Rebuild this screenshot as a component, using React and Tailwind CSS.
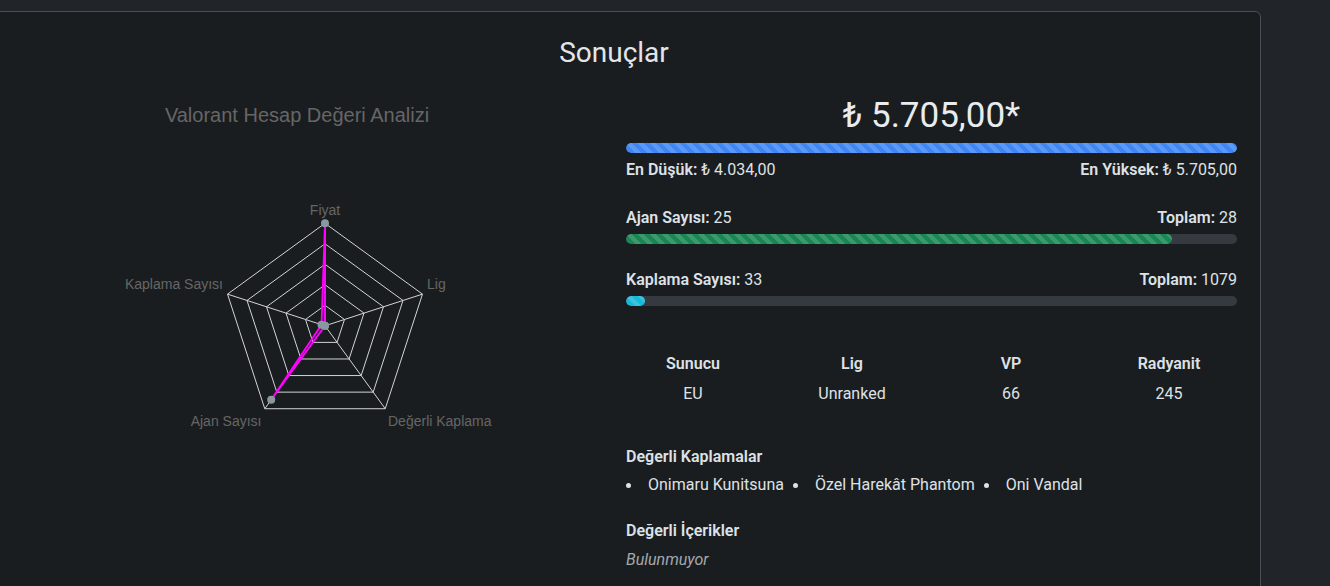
import React from "react";

const stripe =
  "bg-[linear-gradient(45deg,rgba(255,255,255,0.15)_25%,transparent_25%,transparent_50%,rgba(255,255,255,0.15)_50%,rgba(255,255,255,0.15)_75%,transparent_75%,transparent)] bg-[length:12px_12px]";

const CX = 325;
const CY = 325.8;
const R = 102.5;
const values = [1, 0, 0, 25 / 28, 0.036];

function pt(i, r) {
  const a = ((i * 72 - 90) * Math.PI) / 180;
  return [CX + r * Math.cos(a), CY + r * Math.sin(a)];
}

function Radar() {
  const rings = [1, 2, 3, 4, 5].map((k) =>
    [0, 1, 2, 3, 4].map((i) => pt(i, (R * k) / 5).join(",")).join(" ")
  );
  const data = values.map((v, i) => pt(i, v * R));
  return (
    <svg width="610" height="350" viewBox="-8 94 610 350" className="block">
      <text
        x="297"
        y="115"
        textAnchor="middle"
        dominantBaseline="central"
        fill="#666666"
        fontSize="20"
        fontFamily="'Liberation Sans', Arial, sans-serif"
      >
        Valorant Hesap Değeri Analizi
      </text>
      {rings.map((p, i) => (
        <polygon key={i} points={p} fill="none" stroke="#d4d4d4" strokeWidth="1" />
      ))}
      {[0, 1, 2, 3, 4].map((i) => {
        const [x, y] = pt(i, R);
        return <line key={i} x1={CX} y1={CY} x2={x} y2={y} stroke="#d4d4d4" strokeWidth="1" />;
      })}
      <polygon
        points={data.map((p) => p.join(",")).join(" ")}
        fill="rgba(255,0,255,0.1)"
        stroke="#ff00ff"
        strokeWidth="1.8"
        strokeLinejoin="round"
      />
      {data.map(([x, y], i) => (
        <circle key={i} cx={x} cy={y} r="4" fill="#8a999e" />
      ))}
      <g fill="#666666" fontSize="14" fontFamily="'Liberation Sans', Arial, sans-serif">
        <text x="325" y="209.5" textAnchor="middle" dominantBaseline="central">Fiyat</text>
        <text x="427" y="283.5" textAnchor="start" dominantBaseline="central">Lig</text>
        <text x="223" y="283.5" textAnchor="end" dominantBaseline="central">Kaplama Sayısı</text>
        <text x="261.5" y="420.5" textAnchor="end" dominantBaseline="central">Ajan Sayısı</text>
        <text x="388" y="420.5" textAnchor="start" dominantBaseline="central">Değerli Kaplama</text>
      </g>
    </svg>
  );
}

function Bar({ color, pct }) {
  return (
    <div className="h-[10px] w-full overflow-hidden rounded-full bg-[#343a40]">
      <div className={`h-full rounded-full ${color} ${stripe}`} style={{ width: `${pct}%` }} />
    </div>
  );
}

export default function App() {
  const skins = ["Onimaru Kunitsuna", "Özel Harekât Phantom", "Oni Vandal"];
  return (
    <div className="h-[586px] w-[1330px] overflow-hidden bg-[#212529] pt-[11px] font-['Roboto',sans-serif] text-[16px] text-[#dee2e6]">
      <div className="-ml-[33px] h-[700px] w-[1294px] rounded-md border border-[#4b5056] bg-[#1a1d20] p-6">
        <h3 className="mb-6 text-center text-[28px] font-normal leading-[34px] text-[#e3e6e9]">Sonuçlar</h3>
        <div className="flex gap-6">
          <div className="w-[610px] shrink-0">
            <Radar />
          </div>
          <div className="w-[611px] min-w-0 shrink-0">
            <div className="text-center text-[35px] leading-[44px] text-[#e9ecef]">₺ 5.705,00*</div>
            <div className="mt-[5px]">
              <Bar color="bg-[#3f87f5]" pct={100} />
            </div>
            <div className="mt-[5px] flex justify-between leading-6">
              <span>
                <b className="font-semibold">En Düşük:</b> ₺ 4.034,00
              </span>
              <span>
                <b className="font-semibold">En Yüksek:</b> ₺ 5.705,00
              </span>
            </div>
            <div className="mt-6 flex justify-between leading-6">
              <span>
                <b className="font-semibold">Ajan Sayısı:</b> 25
              </span>
              <span>
                <b className="font-semibold">Toplam:</b> 28
              </span>
            </div>
            <div className="mt-[4px]">
              <Bar color="bg-[#198754]" pct={(25 / 28) * 100} />
            </div>
            <div className="mt-6 flex justify-between leading-6">
              <span>
                <b className="font-semibold">Kaplama Sayısı:</b> 33
              </span>
              <span>
                <b className="font-semibold">Toplam:</b> 1079
              </span>
            </div>
            <div className="mt-[4px]">
              <Bar color="bg-[#17b9d8]" pct={(33 / 1079) * 100} />
            </div>
            <div className="mt-[43px] grid w-[634px] grid-cols-[134px_184px_134px_182px] text-center leading-[30px]">
              <div className="font-semibold">Sunucu</div>
              <div className="font-semibold">Lig</div>
              <div className="font-semibold">VP</div>
              <div className="font-semibold">Radyanit</div>
              <div>EU</div>
              <div>Unranked</div>
              <div>66</div>
              <div>245</div>
            </div>
            <div className="mt-9 font-semibold leading-6">Değerli Kaplamalar</div>
            <ul className="mt-1 flex leading-6">
              {skins.map((s) => (
                <li key={s} className="mr-[9px] flex items-center">
                  <span className="h-[5px] w-[5px] rounded-full bg-[#dee2e6]" />
                  <span className="ml-[17px]">{s}</span>
                </li>
              ))}
            </ul>
            <div className="mt-[22px] font-semibold leading-6">Değerli İçerikler</div>
            <div className="mt-[5px] italic leading-6 text-[#a3a8ad]">Bulunmuyor</div>
          </div>
        </div>
      </div>
    </div>
  );
}
